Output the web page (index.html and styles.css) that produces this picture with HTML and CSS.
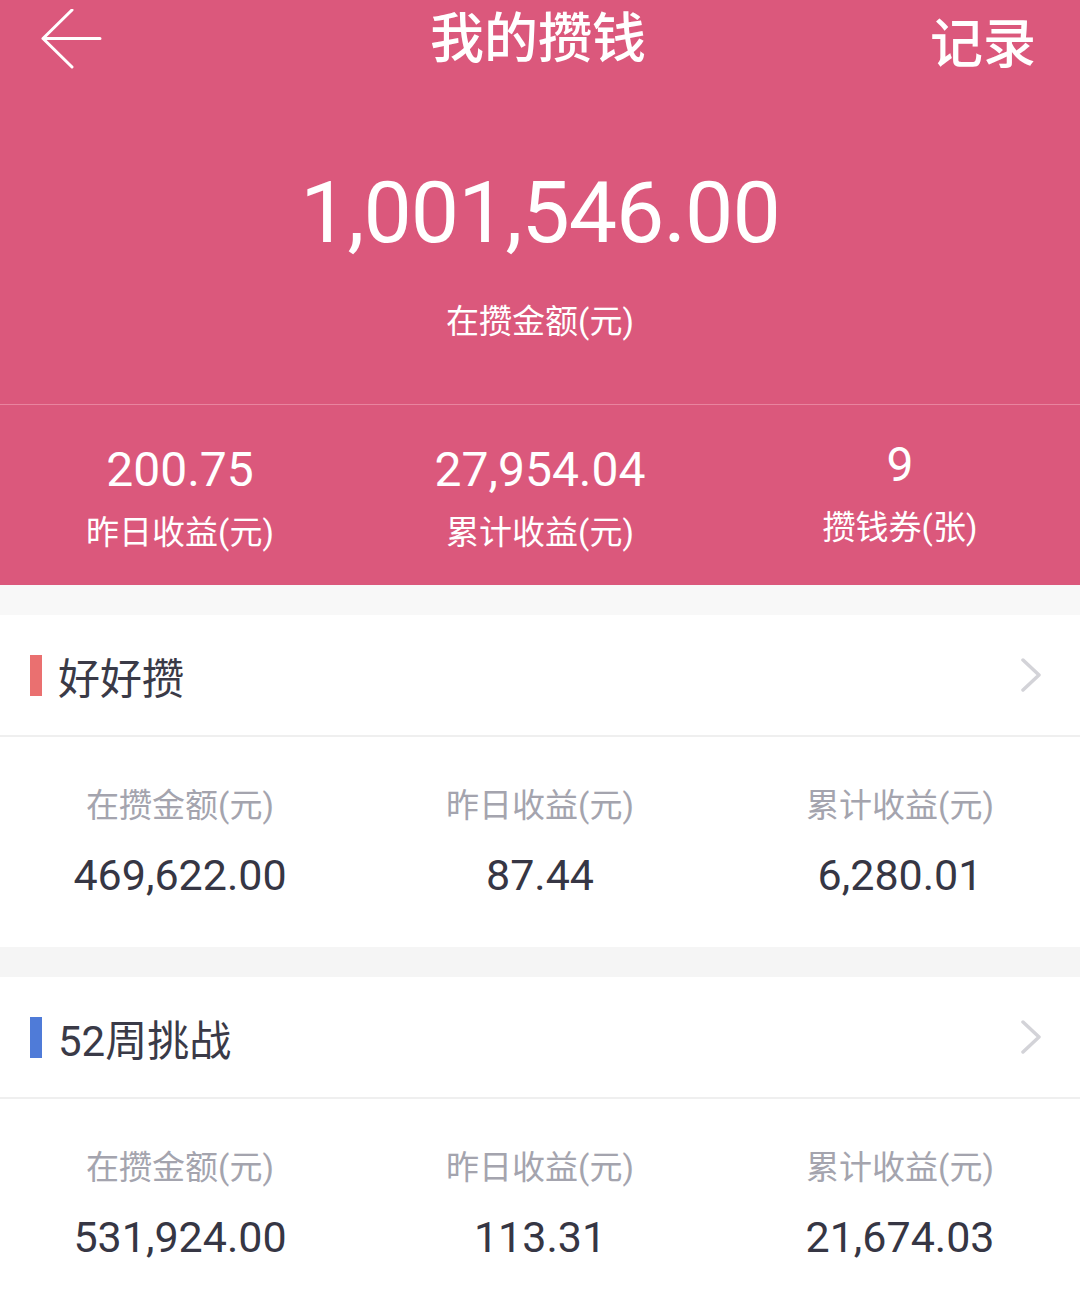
FILE: index.html
```html
<!DOCTYPE html>
<html lang="zh-CN">
<head>
    <meta charset="UTF-8">
    <meta name="viewport" content="width=device-width, initial-scale=1.0">
    <title>我的攒钱</title>
    <link rel="stylesheet" href="styles.css">
</head>
<body>
    <div class="top">
        <div class="nav">
            <a class="back" href="#">
                <svg width="62" height="62" viewBox="0 0 62 62">
                    <path d="M60 29.5H3M32 1L3 29.5L32 58" fill="none" stroke="#fff" stroke-width="3" stroke-linecap="round" stroke-linejoin="round"/>
                </svg>
            </a>
            <h1 class="nav-title">我的攒钱</h1>
            <a class="nav-link" href="#">记录</a>
        </div>
        <div class="total">
            <div class="total-num">1,001,546.00</div>
            <div class="total-label">在攒金额(元)</div>
        </div>
        <div class="stats">
            <div class="stat">
                <div class="stat-num">200.75</div>
                <div class="stat-label">昨日收益(元)</div>
            </div>
            <div class="stat">
                <div class="stat-num">27,954.04</div>
                <div class="stat-label">累计收益(元)</div>
            </div>
            <div class="stat stat-up">
                <div class="stat-num">9</div>
                <div class="stat-label">攒钱券(张)</div>
            </div>
        </div>
    </div>

    <div class="gap"></div>

    <div class="card">
        <div class="card-head">
            <span class="mark mark-red"></span>
            <span class="card-title">好好攒</span>
            <svg class="arrow" width="22" height="34" viewBox="0 0 22 34">
                <path d="M3 2L19 17L3 32" fill="none" stroke="#d3d3d8" stroke-width="3.5" stroke-linecap="round" stroke-linejoin="round"/>
            </svg>
        </div>
        <div class="card-body">
            <div class="cell">
                <div class="cell-label">在攒金额(元)</div>
                <div class="cell-num">469,622.00</div>
            </div>
            <div class="cell">
                <div class="cell-label">昨日收益(元)</div>
                <div class="cell-num">87.44</div>
            </div>
            <div class="cell">
                <div class="cell-label">累计收益(元)</div>
                <div class="cell-num">6,280.01</div>
            </div>
        </div>
    </div>

    <div class="gap gap-dark"></div>

    <div class="card">
        <div class="card-head">
            <span class="mark mark-blue"></span>
            <span class="card-title">52周挑战</span>
            <svg class="arrow" width="22" height="34" viewBox="0 0 22 34">
                <path d="M3 2L19 17L3 32" fill="none" stroke="#d3d3d8" stroke-width="3.5" stroke-linecap="round" stroke-linejoin="round"/>
            </svg>
        </div>
        <div class="card-body">
            <div class="cell">
                <div class="cell-label">在攒金额(元)</div>
                <div class="cell-num">531,924.00</div>
            </div>
            <div class="cell">
                <div class="cell-label">昨日收益(元)</div>
                <div class="cell-num">113.31</div>
            </div>
            <div class="cell">
                <div class="cell-label">累计收益(元)</div>
                <div class="cell-num">21,674.03</div>
            </div>
        </div>
    </div>
</body>
</html>
```

FILE: styles.css
```css
body {
    font-family: Roboto, "Noto Sans CJK SC", sans-serif;
    background-color: #fff;
    margin: 0;
    padding: 0;
}
.top {
    background-color: #db587c;
    color: #fff;
}
.nav {
    height: 80px;
    display: flex;
    align-items: center;
    justify-content: space-between;
    padding: 0 44px 0 40px;
}
.back {
    display: flex;
    width: 120px;
}
.nav-title {
    margin: 0;
    font-size: 54px;
    font-weight: 500;
    line-height: 80px;
}
.nav-link {
    width: 120px;
    text-align: right;
    color: #fff;
    text-decoration: none;
    font-size: 53px;
    font-weight: 500;
}
.total {
    text-align: center;
    padding: 83px 0 62px;
    border-bottom: 1px solid #e9849f;
}
.total-num {
    font-size: 86px;
    line-height: 100px;
    letter-spacing: -1px;
}
.total-label {
    font-size: 33px;
    line-height: 40px;
    margin-top: 39px;
}
.stats {
    display: grid;
    grid-template-columns: 1fr 1fr 1fr;
    padding: 38px 0 32px;
}
.stat {
    text-align: center;
}
.stat-num {
    font-size: 48px;
    line-height: 54px;
}
.stat-label {
    font-size: 33px;
    line-height: 40px;
    margin-top: 16px;
}
.stat-up {
    margin-top: -5px;
}
.gap {
    height: 30px;
    background-color: #f8f8f8;
}
.gap-dark {
    background-color: #f5f5f5;
}
.card-head {
    height: 120px;
    display: flex;
    align-items: center;
    padding: 0 38px 0 30px;
    border-bottom: 2px solid #efefef;
}
.mark {
    width: 12px;
    height: 41px;
    margin-right: 16px;
}
.mark-red {
    background-color: #ea7070;
}
.mark-blue {
    background-color: #4f7bd8;
}
.card-title {
    flex: 1;
    font-size: 42px;
    color: #3a3a47;
}
.card-body {
    display: grid;
    grid-template-columns: 1fr 1fr 1fr;
    padding: 49px 0 47px;
}
.cell {
    text-align: center;
}
.cell-label {
    font-size: 33px;
    line-height: 40px;
    color: #a4a4ae;
}
.cell-num {
    font-size: 43px;
    line-height: 50px;
    margin-top: 24px;
    color: #363644;
}
```
